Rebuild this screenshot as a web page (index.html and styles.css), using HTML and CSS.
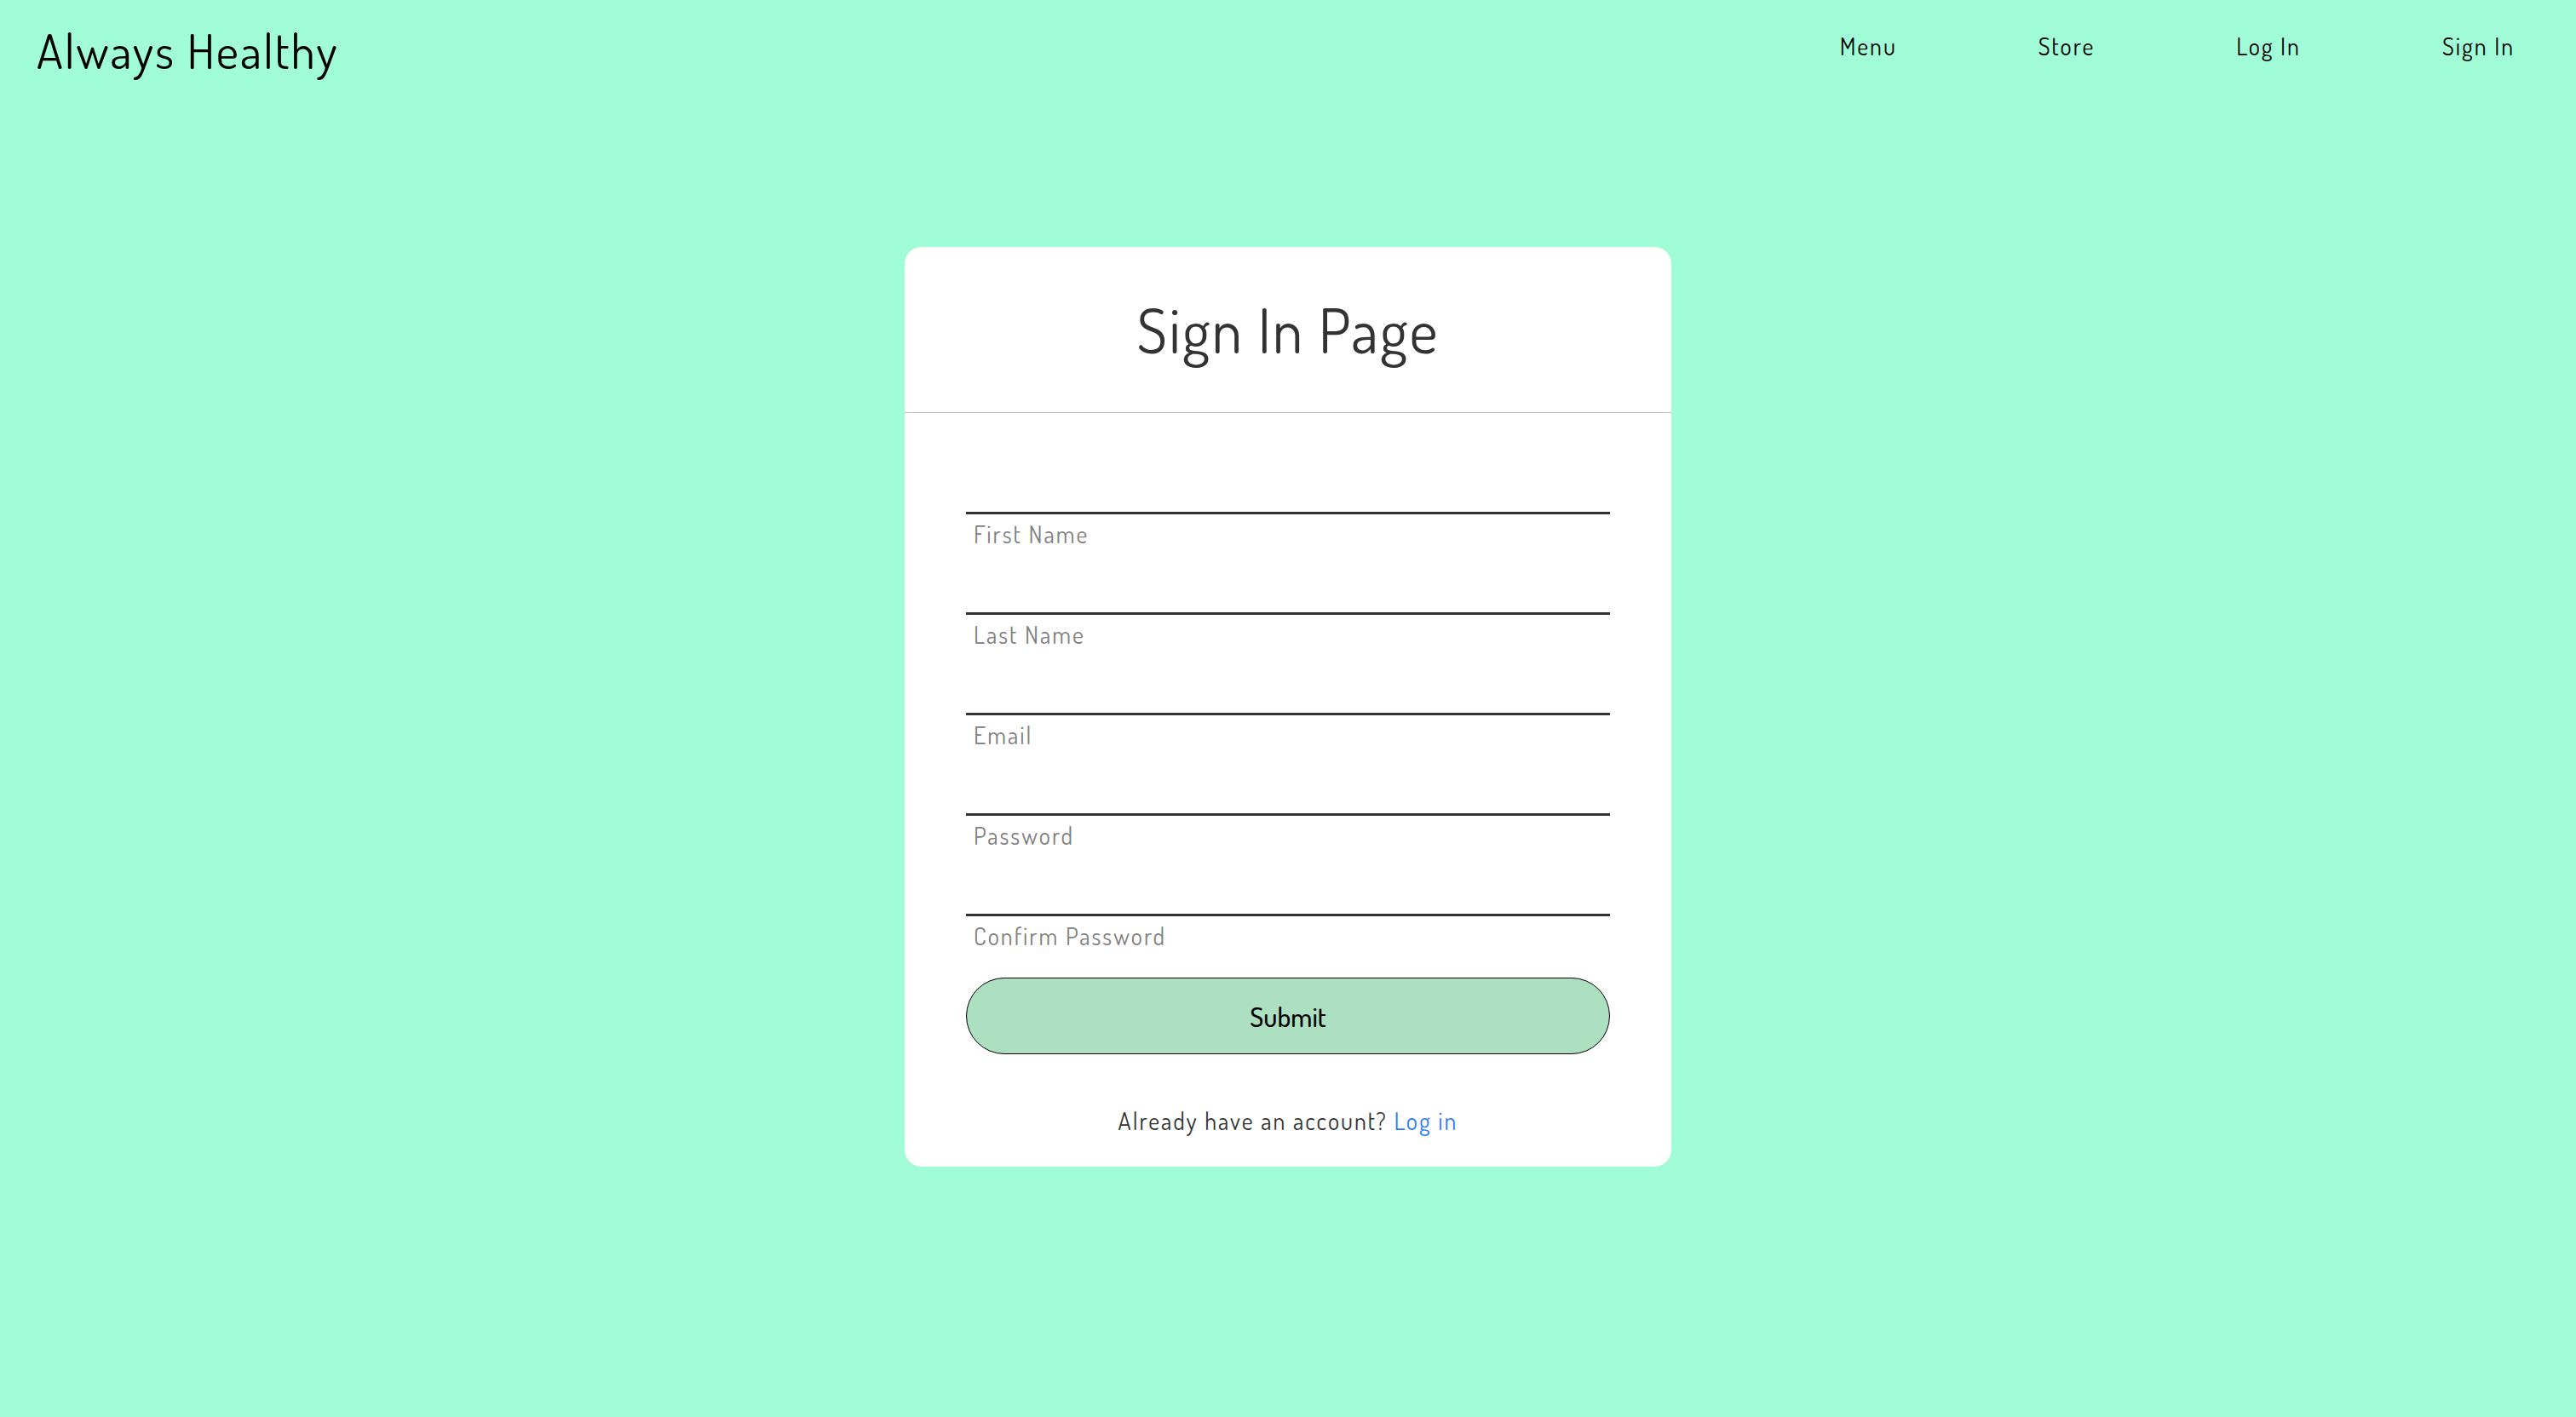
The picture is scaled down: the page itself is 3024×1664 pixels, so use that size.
FILE: index.html
```html
<!DOCTYPE html>
<html lang="en">
<head>
<meta charset="utf-8">
<meta name="viewport" content="width=device-width, initial-scale=1">
<title>Always Healthy</title>
<link rel="stylesheet" href="styles.css">
</head>
<body>
<header class="site-header">
  <a class="brand" href="#">Always Healthy</a>
  <nav class="site-nav">
    <a href="#">Menu</a>
    <a href="#">Store</a>
    <a href="#">Log In</a>
    <a href="#">Sign In</a>
  </nav>
</header>
<main class="page">
  <section class="card">
    <h1 class="card-title">Sign In Page</h1>
    <form class="card-form">
      <div class="field"><input type="text" id="first-name"><label for="first-name">First Name</label></div>
      <div class="field"><input type="text" id="last-name"><label for="last-name">Last Name</label></div>
      <div class="field"><input type="email" id="email"><label for="email">Email</label></div>
      <div class="field"><input type="password" id="password"><label for="password">Password</label></div>
      <div class="field"><input type="password" id="confirm"><label for="confirm">Confirm Password</label></div>
      <button class="submit" type="submit">Submit</button>
      <p class="switch">Already have an account? <a href="#">Log in</a></p>
    </form>
  </section>
</main>
</body>
</html>
```
FILE: styles.css
```css
* {
  box-sizing: border-box;
}

body {
  margin: 0;
  min-height: 100vh;
  background: #a0fdd8;
  color: #333;
  font-family: Dosis, Lato, sans-serif;
  font-size: 28px;
  font-weight: 400;
  letter-spacing: 2px;
}

a {
  text-decoration: none;
}

.site-header {
  display: flex;
  justify-content: space-between;
  align-items: flex-start;
  padding: 24px 72px 24px 43px;
}

.brand {
  color: #000;
  font-size: 57px;
  line-height: 70px;
}

.site-nav {
  display: flex;
  gap: 166px;
  line-height: 60px;
}

.site-nav a {
  color: #000;
}

.page {
  display: flex;
  justify-content: center;
  padding: 172px 24px 48px;
}

.card {
  width: 100%;
  max-width: 900px;
  background: #fff;
  border-radius: 20px;
}

.card-title {
  margin: 0;
  padding: 48px 0;
  border-bottom: 1px solid silver;
  font-size: 72px;
  font-weight: 400;
  line-height: 98px;
  text-align: center;
}

.card-form {
  display: flex;
  flex-direction: column;
  gap: 12px;
  padding: 59px 72px 24px;
}

.field {
  display: flex;
  flex-direction: column;
}

.field input {
  width: 100%;
  height: 60px;
  padding: 0 10px;
  border: 0;
  border-bottom: 3px solid #333;
  background: none;
  color: #333;
  font: inherit;
  outline: none;
}

.field label {
  padding: 0 9px;
  color: #808080;
  line-height: 46px;
}

.submit {
  height: 90px;
  margin-top: 14px;
  border: 1px solid #000;
  border-radius: 45px;
  background: #addfc1;
  color: #000;
  font-family: inherit;
  font-size: 32px;
  font-weight: 500;
  cursor: pointer;
}

.switch {
  margin: 36px 0 0;
  line-height: 60px;
  text-align: center;
}

.switch a {
  color: #2e7bf6;
}
```
